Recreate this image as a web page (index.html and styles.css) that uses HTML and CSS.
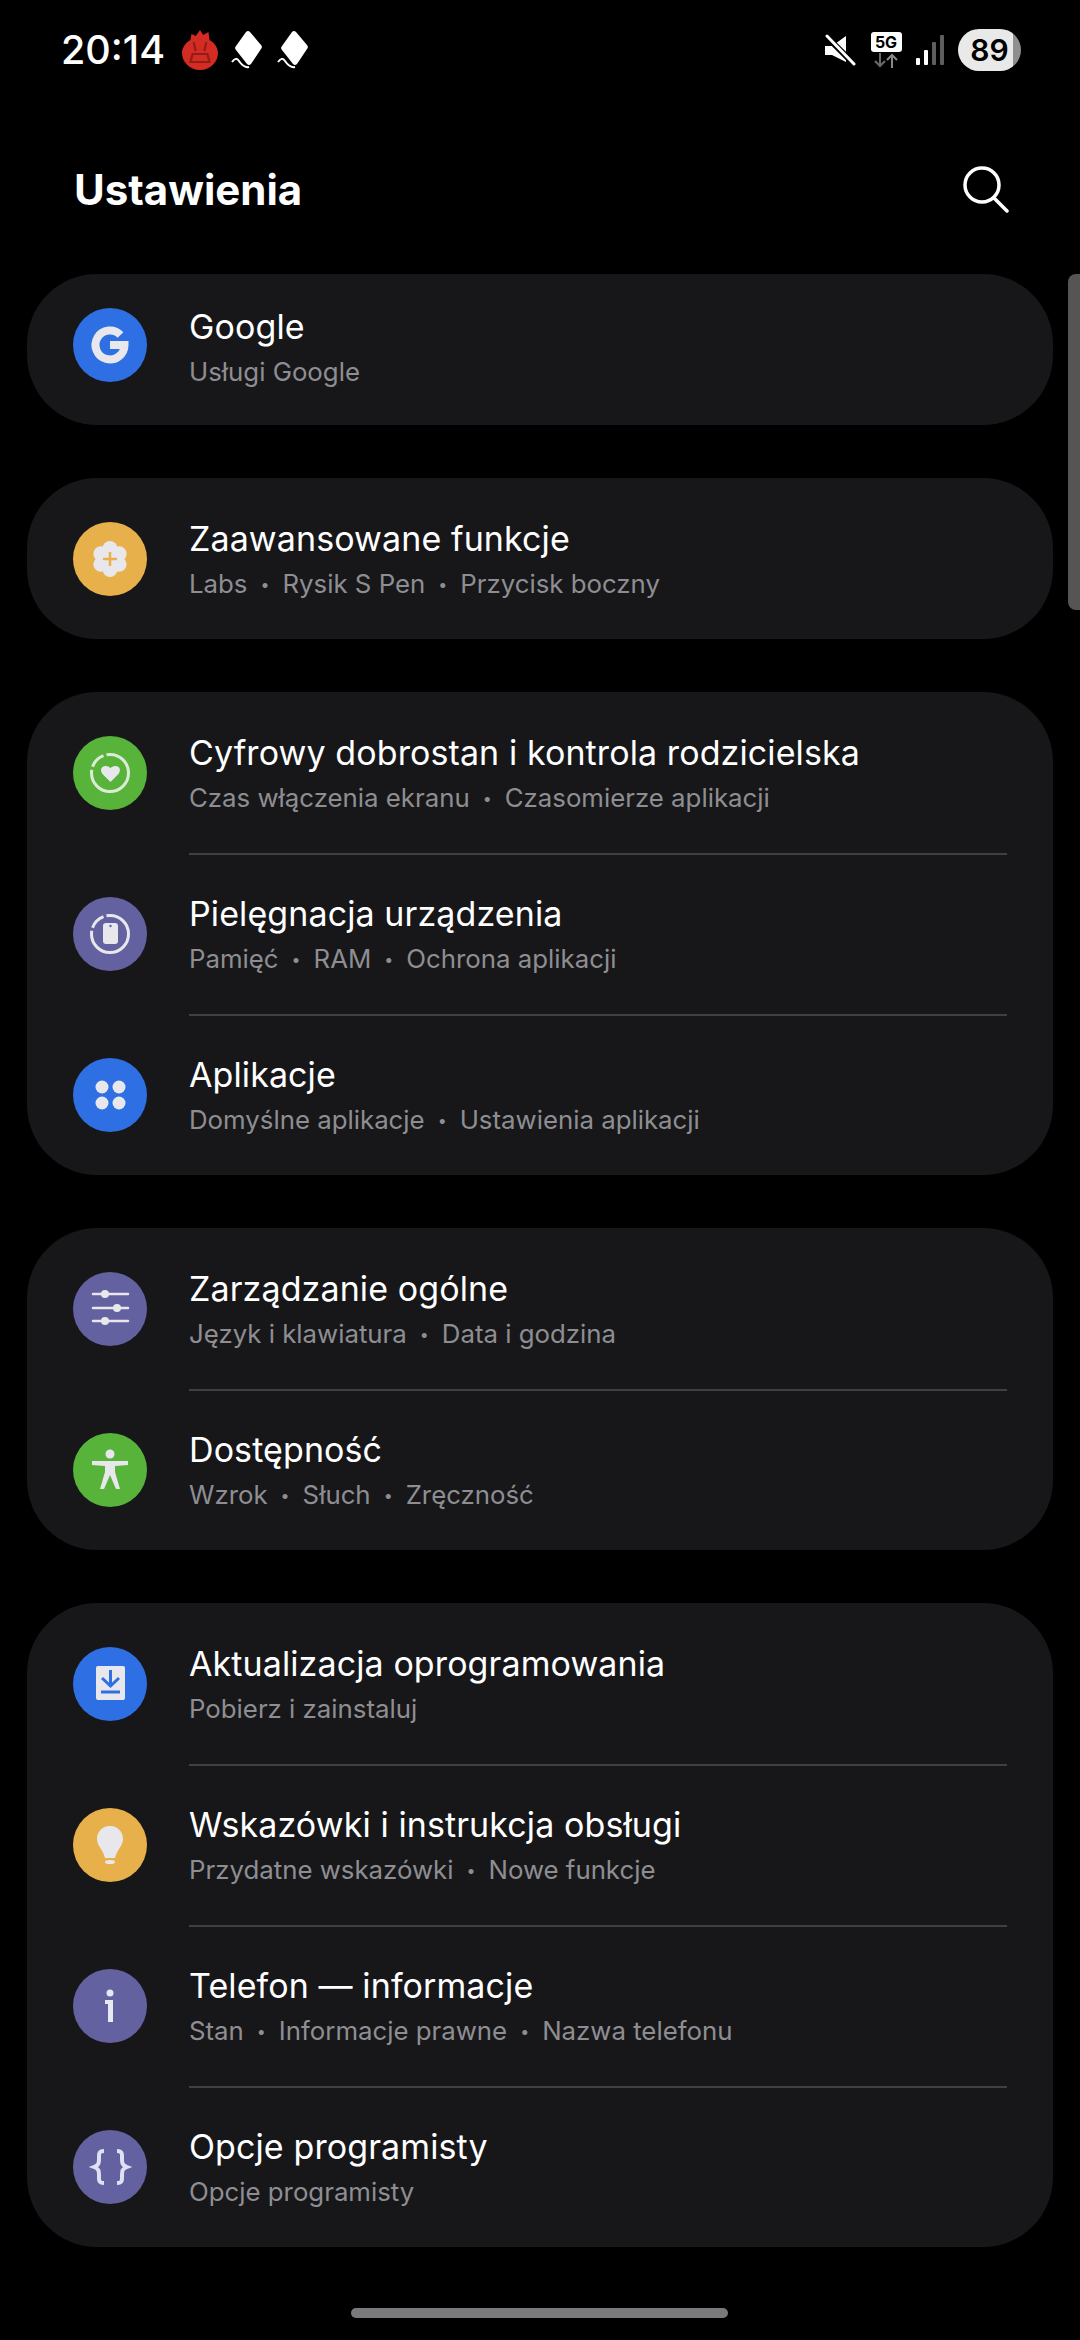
FILE: index.html
```html
<!DOCTYPE html>
<html lang="pl">
<head>
    <meta charset="UTF-8">
    <meta name="viewport" content="width=device-width, initial-scale=1.0">
    <title>Ustawienia</title>
    <link rel="stylesheet" href="styles.css">
</head>
<body>
    <div class="status-bar">
        <div class="status-left">
            <span class="clock">20:14</span>
            <svg class="hot-icon" width="36" height="40" viewBox="0 0 34 40" preserveAspectRatio="none">
                <path fill="#d42b22" d="M17 0l3 5 5-3 1 8c5 3 8 8 8 13a17 17 0 0 1-34 0c0-5 3-10 8-13l1-6 4 2z"/>
                <path fill="none" stroke="#8f1d18" stroke-width="2" d="M11 12l2 9M23 12l-2 9M10 24h14l2 8H8z"/>
            </svg>
            <svg width="32" height="38" viewBox="0 0 32 38">
                <path fill="#fff" d="M15 1a3 3 0 0 1 4 0l11 13a3 3 0 0 1 0 4L20 33a3 3 0 0 1-4 0L5 19a3 3 0 0 1 0-4z"/>
                <path fill="none" stroke="#fff" stroke-width="2" d="M1 31c3-4 5-4 7-1s5 7 10 6"/>
            </svg>
            <svg width="32" height="38" viewBox="0 0 32 38">
                <path fill="#fff" d="M15 1a3 3 0 0 1 4 0l11 13a3 3 0 0 1 0 4L20 33a3 3 0 0 1-4 0L5 19a3 3 0 0 1 0-4z"/>
                <path fill="none" stroke="#fff" stroke-width="2" d="M1 31c3-4 5-4 7-1s5 7 10 6"/>
            </svg>
        </div>
        <div class="status-right">
            <svg width="32" height="32" viewBox="0 0 32 32">
                <path fill="#fff" d="M1 12h7L22 2v26L8 21H1z"/>
                <path stroke="#000" stroke-width="6" d="M1 1l30 30"/>
                <path stroke="#fff" stroke-width="3" stroke-linecap="round" d="M3 2l27 28"/>
            </svg>
            <div class="net">
                <span class="net-label">5G</span>
                <svg width="24" height="15" viewBox="0 0 24 15">
                    <path fill="none" stroke="#6a6a6a" stroke-width="2" d="M6 0v13M1 8l5 5 5-5"/>
                    <path fill="none" stroke="#8a8a8a" stroke-width="2" d="M18 15V2M13 7l5-5 5 5"/>
                </svg>
            </div>
            <svg width="28" height="30" viewBox="0 0 28 30">
                <rect x="0" y="23" width="4" height="7" rx="1" fill="#fff"/>
                <rect x="8" y="15" width="4" height="15" rx="1" fill="#fff"/>
                <rect x="16" y="7" width="4" height="23" rx="1" fill="#5e5e5e"/>
                <rect x="24" y="0" width="4" height="30" rx="1" fill="#5e5e5e"/>
            </svg>
            <div class="battery">89</div>
        </div>
    </div>

    <div class="header">
        <h1 class="page-title">Ustawienia</h1>
        <svg class="search" width="48" height="48" viewBox="0 0 48 48">
            <circle cx="20" cy="20" r="17" fill="none" stroke="#fff" stroke-width="3.5"/>
            <path stroke="#fff" stroke-width="3.5" stroke-linecap="round" d="M32 33l13 13"/>
        </svg>
    </div>

    <div class="scrollbar"></div>

    <div class="card">
        <div class="row row-first">
            <div class="icon blue">
                <svg width="74" height="74" viewBox="0 0 74 74"><path fill="none" stroke="#e8e8ec" stroke-width="8" d="M47.500 27a14.500 14.500 0 1 0 4 10H37"/></svg>
            </div>
            <div class="text">
                <div class="title">Google</div>
                <div class="sub">Usługi Google</div>
            </div>
        </div>
    </div>

    <div class="card">
        <div class="row">
            <div class="icon amber">
                <svg width="74" height="74" viewBox="0 0 74 74">
                    <circle cx="37" cy="26.500" r="7.500" fill="#e8e8ec"/>
                    <circle cx="37" cy="47.500" r="7.500" fill="#e8e8ec"/>
                    <circle cx="27.900" cy="31.750" r="7.500" fill="#e8e8ec"/>
                    <circle cx="46.100" cy="31.750" r="7.500" fill="#e8e8ec"/>
                    <circle cx="27.900" cy="42.250" r="7.500" fill="#e8e8ec"/>
                    <circle cx="46.100" cy="42.250" r="7.500" fill="#e8e8ec"/>
                    <circle cx="37" cy="37" r="6" fill="#e8e8ec"/>
                    <path stroke="#e8b04a" stroke-width="2.500" d="M37 30v14M30 37h14"/>
                </svg>
            </div>
            <div class="text">
                <div class="title">Zaawansowane funkcje</div>
                <div class="sub">Labs<i>•</i>Rysik S Pen<i>•</i>Przycisk boczny</div>
            </div>
        </div>
    </div>

    <div class="card">
        <div class="row">
            <div class="icon green">
                <svg width="74" height="74" viewBox="0 0 74 74">
                    <circle cx="37" cy="37" r="18.500" fill="none" stroke="#dcebd5" stroke-width="3" stroke-dasharray="61 3 16 3 33 0"/>
                    <path fill="#e8e8ec" d="M37.500 46l-8-8c-4-5 1-11 8-6 7-5 12 1 8 6z"/>
                </svg>
            </div>
            <div class="text">
                <div class="title">Cyfrowy dobrostan i kontrola rodzicielska</div>
                <div class="sub">Czas włączenia ekranu<i>•</i>Czasomierze aplikacji</div>
            </div>
        </div>
        <div class="row">
            <div class="icon purple">
                <svg width="74" height="74" viewBox="0 0 74 74">
                    <circle cx="37" cy="37" r="18.500" fill="none" stroke="#e8e8ec" stroke-width="3" stroke-dasharray="61 3 16 3 33 0"/>
                    <rect x="30" y="26" width="15" height="21" rx="3" fill="#e8e8ec"/>
                    <circle cx="37.500" cy="29" r="1.200" fill="#6461a0"/>
                </svg>
            </div>
            <div class="text">
                <div class="title">Pielęgnacja urządzenia</div>
                <div class="sub">Pamięć<i>•</i>RAM<i>•</i>Ochrona aplikacji</div>
            </div>
        </div>
        <div class="row">
            <div class="icon blue">
                <svg width="74" height="74" viewBox="0 0 74 74">
                    <circle cx="29" cy="29" r="6.500" fill="#e8e8ec"/>
                    <circle cx="46" cy="29" r="6.500" fill="#e8e8ec"/>
                    <circle cx="29" cy="45" r="6.500" fill="#e8e8ec"/>
                    <circle cx="46" cy="45" r="6.500" fill="#e8e8ec"/>
                </svg>
            </div>
            <div class="text">
                <div class="title">Aplikacje</div>
                <div class="sub">Domyślne aplikacje<i>•</i>Ustawienia aplikacji</div>
            </div>
        </div>
    </div>

    <div class="card">
        <div class="row">
            <div class="icon purple">
                <svg width="74" height="74" viewBox="0 0 74 74">
                    <path stroke="#e8e8ec" stroke-width="2.500" stroke-linecap="round" d="M20 22h35M20 36h35M20 49h35"/>
                    <circle cx="32" cy="22" r="4" fill="#e8e8ec"/>
                    <circle cx="44" cy="36" r="4" fill="#e8e8ec"/>
                    <circle cx="32" cy="49" r="4" fill="#e8e8ec"/>
                </svg>
            </div>
            <div class="text">
                <div class="title">Zarządzanie ogólne</div>
                <div class="sub">Język i klawiatura<i>•</i>Data i godzina</div>
            </div>
        </div>
        <div class="row">
            <div class="icon green">
                <svg width="74" height="74" viewBox="0 0 74 74">
                    <circle cx="37" cy="21" r="4.500" fill="#e8e8ec"/>
                    <path fill="#e8e8ec" d="M19 28h36v4l-13 1v6l5 17h-4l-6-14-6 14h-4l5-17v-6l-13-1z"/>
                </svg>
            </div>
            <div class="text">
                <div class="title">Dostępność</div>
                <div class="sub">Wzrok<i>•</i>Słuch<i>•</i>Zręczność</div>
            </div>
        </div>
    </div>

    <div class="card">
        <div class="row">
            <div class="icon blue">
                <svg width="74" height="74" viewBox="0 0 74 74">
                    <rect x="23" y="19" width="29" height="34" rx="2" fill="#e8e8ec"/>
                    <path fill="none" stroke="#2f6fe4" stroke-width="3" d="M37.500 23v16M29 31l8.500 8 8.500-8"/>
                    <path stroke="#2f6fe4" stroke-width="3" d="M28 45h19"/>
                </svg>
            </div>
            <div class="text">
                <div class="title">Aktualizacja oprogramowania</div>
                <div class="sub">Pobierz i zainstaluj</div>
            </div>
        </div>
        <div class="row">
            <div class="icon amber">
                <svg width="74" height="74" viewBox="0 0 74 74">
                    <path fill="#e8e8ec" d="M37 18c8 0 13 6 13 13 0 7-6 10-8 19H32c-2-9-8-12-8-19 0-7 5-13 13-13z"/>
                    <ellipse cx="37" cy="54" rx="5" ry="2" fill="#e8e8ec"/>
                </svg>
            </div>
            <div class="text">
                <div class="title">Wskazówki i instrukcja obsługi</div>
                <div class="sub">Przydatne wskazówki<i>•</i>Nowe funkcje</div>
            </div>
        </div>
        <div class="row">
            <div class="icon purple">
                <svg width="74" height="74" viewBox="0 0 74 74">
                    <circle cx="37" cy="24" r="3.500" fill="#e8e8f4"/>
                    <path fill="#e8e8f4" d="M32 31h8v22h-5V35h-3z"/>
                </svg>
            </div>
            <div class="text">
                <div class="title">Telefon — informacje</div>
                <div class="sub">Stan<i>•</i>Informacje prawne<i>•</i>Nazwa telefonu</div>
            </div>
        </div>
        <div class="row">
            <div class="icon purple">
                <svg width="74" height="74" viewBox="0 0 74 74">
                    <path fill="none" stroke="#e0e0f4" stroke-width="4" d="M31 21c-6 0-5 4-5 8s0 6-5 8c5 2 5 4 5 8s-1 8 5 8M44 21c6 0 5 4 5 8s0 6 5 8c-5 2-5 4-5 8s1 8-5 8"/>
                </svg>
            </div>
            <div class="text">
                <div class="title">Opcje programisty</div>
                <div class="sub">Opcje programisty</div>
            </div>
        </div>
    </div>

    <div class="home-bar"></div>
</body>
</html>
```

FILE: styles.css
```css
html, body {
    margin: 0;
    height: 2340px;
    overflow: hidden;
}

body {
    background-color: #000;
    color: #fff;
    font-family: Inter, Roboto, sans-serif;
}

.status-bar {
    height: 100px;
    padding: 0 59px 0 61px;
    display: flex;
    justify-content: space-between;
    align-items: center;
}

.status-left, .status-right {
    display: flex;
    align-items: center;
}

.status-left {
    gap: 14px;
}

.clock {
    font-size: 39.500px;
    font-weight: 500;
    margin-right: 3px;
}

.hot-icon {
    margin-right: -1px;
}

.status-right {
    gap: 14px;
}

.net {
    width: 32px;
    display: flex;
    flex-direction: column;
    align-items: center;
    gap: 1px;
}

.net-label {
    width: 31px;
    height: 20px;
    line-height: 20px;
    text-align: center;
    background-color: #fff;
    color: #000;
    border-radius: 3px;
    font-size: 16px;
    font-weight: 700;
}

.battery {
    width: 63px;
    height: 42px;
    line-height: 42px;
    text-align: center;
    border-radius: 21px;
    background: linear-gradient(90deg, #e9e9e9 87%, #8f8f8f 87%);
    color: #000;
    font-size: 30px;
    font-weight: 600;
}

.header {
    height: 174px;
    padding: 0 70px 0 74px;
    box-sizing: border-box;
    display: flex;
    justify-content: space-between;
    align-items: flex-start;
}

.page-title {
    margin: 66px 0 0;
    font-size: 42px;
    line-height: 48px;
    font-weight: 700;
}

.search {
    margin-top: 65px;
}

.scrollbar {
    position: absolute;
    top: 274px;
    right: 0;
    width: 12px;
    height: 336px;
    background-color: #555;
    border-radius: 8px 0 0 8px;
}

.card {
    margin: 0 27px 53px;
    background-color: #17171a;
    border-radius: 70px;
}

.row {
    height: 161px;
    padding: 0 46px 0 46px;
    display: flex;
    align-items: center;
    gap: 42px;
}

.row-first {
    height: 151px;
    align-items: flex-start;
}

.row-first .icon {
    margin-top: 34px;
}

.icon {
    width: 74px;
    height: 74px;
    border-radius: 50%;
    flex-shrink: 0;
}

.icon svg {
    display: block;
}

.blue { background-color: #2f6fe4; }
.amber { background-color: #e8b04a; }
.green { background-color: #58b33a; }
.purple { background-color: #6461a0; }

.text {
    flex: 1;
    align-self: stretch;
    display: flex;
    flex-direction: column;
    justify-content: center;
    padding-top: 2px;
    box-sizing: border-box;
}

.row-first .text {
    padding-top: 0;
    padding-bottom: 4px;
}

.row + .row .text {
    box-shadow: inset 0 2px 0 #404042;
}

.title {
    font-size: 34px;
    line-height: 42px;
    letter-spacing: 0.1px;
}

.sub {
    margin-top: 6px;
    font-size: 25.800px;
    line-height: 36px;
    color: #8e8e92;
}

.sub i {
    font-style: normal;
    font-size: 16px;
    margin: 0 13px;
    vertical-align: 3px;
}

.home-bar {
    position: absolute;
    left: 351px;
    top: 2308px;
    width: 377px;
    height: 10px;
    border-radius: 5px;
    background-color: #7a7a7c;
}
```
